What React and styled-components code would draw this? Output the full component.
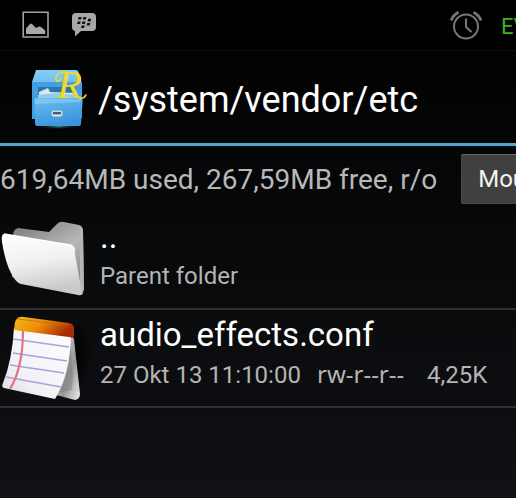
import React from "react";
import styled, { createGlobalStyle } from "styled-components";

const files = [
  { name: "..", details: "Parent folder", icon: FolderIcon },
  {
    name: "audio_effects.conf",
    details: "27 Okt 13 11:10:00",
    permissions: "rw-r--r--",
    size: "4,25K",
    icon: NoteIcon,
  },
];

function App() {
  return (
    <>
      <GlobalStyle />
      <Screen>
        <StatusBar>
          <StatusGroup>
            <PictureIcon />
            <MessengerIcon />
          </StatusGroup>
          <StatusGroup $end>
            <AlarmIcon />
            <Carrier>EV</Carrier>
          </StatusGroup>
        </StatusBar>

        <Header>
          <ExplorerIcon />
          <Title>/system/vendor/etc</Title>
        </Header>

        <Storage>
          <StorageText>619,64MB used, 267,59MB free, r/o</StorageText>
          <MountButton type="button">Mount R/W</MountButton>
        </Storage>

        <FileList>
          {files.map(({ name, details, permissions, size, icon: Icon }) => (
            <li key={name}>
              <FileButton type="button">
                <Icon />
                <FileText>
                  <FileName>{name}</FileName>
                  <FileDetails>
                    <span>{details}</span>
                    {permissions && <Permissions>{permissions}</Permissions>}
                    {size && <span>{size}</span>}
                  </FileDetails>
                </FileText>
              </FileButton>
            </li>
          ))}
        </FileList>
      </Screen>
    </>
  );
}

export default App;

// --------------- icons ------------------

function PictureIcon() {
  return (
    <svg width="28" height="28" viewBox="0 0 28 28" aria-hidden="true">
      <path d="M1.2 1.2H26V26H1.2Z" fill="none" stroke="#a2a2a2" strokeWidth="1.6" />
      <path
        d="M4 23V17.5L8.5 12.5L10 13L14 17L17 15.5L19 16L23.2 19.5V23Z"
        fill="#a8a8a8"
      />
    </svg>
  );
}

function MessengerIcon() {
  return (
    <svg width="26" height="28" viewBox="0 0 26 28" aria-hidden="true">
      <path
        d="M5 2H21Q25 2 25 6V16Q25 20 21 20H10L4 25.5V20Q1 19.5 1 16V6Q1 2 5 2Z"
        fill="#a8a8a8"
      />
      <g fill="#111">
        <path d="M7.5 6H10.6L10 8.6H7Z" />
        <path d="M12.3 6H15.4L14.8 8.6H11.8Z" />
        <path d="M6.6 10.4H9.7L9.1 13H6.1Z" />
        <path d="M11.4 10.4H14.5L13.9 13H10.9Z" />
        <path d="M17.1 7.8H20.2L19.6 10.4H16.6Z" />
        <path d="M16.2 12H19.3L18.7 14.6H15.7Z" />
        <path d="M10.6 14.4H13.7L13.1 17H10.1Z" />
      </g>
    </svg>
  );
}

function AlarmIcon() {
  return (
    <svg
      width="34"
      height="32"
      viewBox="0 0 34 32"
      fill="none"
      stroke="#777"
      strokeWidth="2"
      aria-hidden="true"
    >
      <circle cx="17" cy="17.5" r="12" />
      <path d="M17 9.5V18L22.5 23" />
      <path d="M2.2 11.5Q4 6 9.5 3.2M24.5 3.2Q30 6 32 11.5" strokeWidth="2.8" />
    </svg>
  );
}

function ExplorerIcon() {
  return (
    <svg width="60" height="68" viewBox="0 0 60 68" aria-hidden="true">
      <defs>
        <linearGradient id="cabinetTop" x1="0" y1="0" x2="0" y2="1">
          <stop offset="0" stopColor="#82cdf6" />
          <stop offset="1" stopColor="#3da0e8" />
        </linearGradient>
        <linearGradient id="cabinetFront" x1="0" y1="0" x2="0.4" y2="1">
          <stop offset="0" stopColor="#70bff0" />
          <stop offset="0.5" stopColor="#52aae8" />
          <stop offset="1" stopColor="#3b95dc" />
        </linearGradient>
        <radialGradient id="cabinetGlow">
          <stop offset="0" stopColor="#3b8594" />
          <stop offset="1" stopColor="#000" stopOpacity="0" />
        </radialGradient>
      </defs>
      <ellipse cx="30" cy="62.5" rx="22" ry="3" fill="url(#cabinetGlow)" />
      <path d="M8 6H48Q50 6 51 9L54 20V52Q54 55 50 55H4V18Z" fill="url(#cabinetTop)" />
      <path d="M4 18H54V54L52 55V35H6V55L4 54Z" fill="#449ee2" />
      <path d="M10 23H48V34H10Z" fill="#2c75a8" />
      <path d="M11 28L20 24L22 28L47 29V34H11Z" fill="#d6e8f2" />
      <path d="M10 31L29 29L48 31V35H10Z" fill="#91cbed" />
      <path
        d="M7 34H53Q55 34 54.6 37L53 60Q52.5 62 51 62H9Q7 62 7 59Z"
        fill="url(#cabinetFront)"
      />
      <path d="M7 35H53V38L7 40Z" fill="#91d3fa" opacity="0.55" />
      <rect x="23.5" y="46.5" width="11" height="6" rx="2" fill="#c8dce6" />
      <path d="M25 48H33V51H25Z" fill="#46606c" />
      <path d="M25 51H33" stroke="#fff" />
      <text
        x="29"
        y="34"
        fill="#f1da25"
        fontFamily="'Liberation Serif', serif"
        fontSize="41"
        fontStyle="italic"
      >
        R
      </text>
      <path
        d="M37 7.5Q27 9 28 16Q30 19 33 15M51 33.5Q55 36 58 31"
        fill="none"
        stroke="#f1da25"
        strokeWidth="1.5"
        strokeLinecap="round"
      />
    </svg>
  );
}

function FolderIcon() {
  return (
    <svg width="92" height="90" viewBox="0 0 92 90" aria-hidden="true">
      <defs>
        <linearGradient id="folderFront" x1="0" y1="0" x2="0.2" y2="1">
          <stop offset="0" stopColor="#fff" />
          <stop offset="0.5" stopColor="#f1f1f1" />
          <stop offset="1" stopColor="#c9c9c9" />
        </linearGradient>
        <linearGradient id="folderBack" x1="0" y1="0" x2="0.6" y2="1">
          <stop offset="0" stopColor="#777" />
          <stop offset="0.6" stopColor="#b8b8b8" />
          <stop offset="1" stopColor="#888" />
        </linearGradient>
      </defs>
      <path
        d="M13 21Q13 14 18 13L49 17L57 9Q60 6 64 7L79 10Q83 11 83 16L84 74L82 80L12 62Z"
        fill="url(#folderBack)"
      />
      <path d="M79 11Q83 12 83 17L84 74L82 80L80 70V20Z" fill="#b5b5b5" />
      <path
        d="M4 19L70 30Q74 31 74.5 36L82 78Q82 81 78 80L21 69Q17 68 14 63Q6 52 2 27Q1 19 4 19Z"
        fill="url(#folderFront)"
      />
      <path d="M4 19L70 30Q74 31 74.5 36" fill="none" stroke="#fff" strokeWidth="1.3" />
    </svg>
  );
}

function NoteIcon() {
  return (
    <svg width="92" height="90" viewBox="0 0 92 90" aria-hidden="true">
      <defs>
        <linearGradient id="noteBinding" x1="0" y1="0" x2="1" y2="0.4">
          <stop offset="0" stopColor="#f5bd16" />
          <stop offset="0.5" stopColor="#ed8d09" />
          <stop offset="1" stopColor="#a92b04" />
        </linearGradient>
        <linearGradient id="notePaper" x1="1" y1="0" x2="0" y2="1">
          <stop offset="0" stopColor="#fff" />
          <stop offset="0.7" stopColor="#f1f0f4" />
          <stop offset="1" stopColor="#d8d8dc" />
        </linearGradient>
        <linearGradient id="noteBack" x1="0" y1="0" x2="1" y2="1">
          <stop offset="0" stopColor="#ddd" />
          <stop offset="0.6" stopColor="#989898" />
          <stop offset="1" stopColor="#eee" />
        </linearGradient>
        <radialGradient id="noteShadow">
          <stop offset="0" stopColor="#000" />
          <stop offset="1" stopColor="#000" stopOpacity="0" />
        </radialGradient>
      </defs>
      <ellipse cx="76" cy="40" rx="16" ry="36" fill="url(#noteShadow)" />
      <path d="M71 20L74 26L80 81Q80 86 75 87L56 82Z" fill="url(#noteBack)" />
      <path d="M70 28L73 62L72 77L57 80Z" fill="#777" opacity="0.45" />
      <path d="M14 15L71 22Q70 62 55 86L4 75Q1 74 3 70Q12 48 14 15Z" fill="url(#notePaper)" />
      <path
        d="M13 26L69 34M13 40L67 48M10 52L64 60M6 64L61 74"
        fill="none"
        stroke="#aaa1dc"
        strokeWidth="1.4"
      />
      <path d="M23 17Q23 55 10 76" fill="none" stroke="#e57282" strokeWidth="2.2" />
      <path
        d="M15 9Q17 3 24 4L69 10Q74 11 74 15V23Q73 26 69 24L14 17Z"
        fill="url(#noteBinding)"
      />
      <path d="M17 6L69 12" stroke="#b86c13" strokeWidth="1.2" opacity="0.7" />
    </svg>
  );
}

// --------------- styles ------------------

const GlobalStyle = createGlobalStyle`
  * {
    box-sizing: border-box;
  }

  body {
    margin: 0;
    background-color: #0f1013;
    font-family: Roboto, "Liberation Sans", sans-serif;
    overflow-x: hidden;
  }
`;

const Screen = styled.main`
  min-height: 100vh;
  overflow: hidden;
  color: white;
  background: linear-gradient(#000, #08090b 50%, #101114);

  svg {
    flex-shrink: 0;
  }
`;

const StatusBar = styled.div`
  height: 51px;
  display: flex;
  justify-content: space-between;
  align-items: center;
  padding-left: 22px;
  background-color: black;
  border-bottom: 1px solid #101010;
`;

const StatusGroup = styled.div`
  display: flex;
  align-items: center;
  gap: ${({ $end }) => ($end ? "18px" : "21px")};
`;

const Carrier = styled.span`
  width: 15px;
  font-size: 22px;
  line-height: 28px;
  padding-top: 4px;
  white-space: nowrap;
  color: #3cb41c;
`;

const Header = styled.header`
  height: 95px;
  display: flex;
  align-items: center;
  gap: 10px;
  padding: 2px 0 0 28px;
  border-bottom: 3px solid #4fa8cf;
`;

const Title = styled.h1`
  margin: 0;
  padding-top: 4px;
  font-size: 36px;
  line-height: 44px;
  font-weight: 400;
  white-space: nowrap;
`;

const Storage = styled.div`
  height: 66px;
  display: flex;
  align-items: flex-start;
  gap: 24px;
  padding-top: 8px;
`;

const StorageText = styled.p`
  flex-shrink: 0;
  margin: 0;
  font-size: 28px;
  line-height: 52px;
  white-space: nowrap;
  color: #b8b8b8;
`;

const MountButton = styled.button`
  flex-shrink: 0;
  height: 50px;
  padding: 0 16px;
  font: inherit;
  font-size: 24px;
  white-space: nowrap;
  color: #f2f2f2;
  background-color: #404041;
  border: 1px solid #4a4a4a;
  border-top-color: #696969;
  border-radius: 2px;
`;

const FileList = styled.ul`
  list-style: none;
  padding: 0;
  margin: 0;
`;

const FileButton = styled.button`
  width: 100%;
  height: 98px;
  display: flex;
  align-items: center;
  gap: 8px;
  padding: 0;
  font: inherit;
  text-align: left;
  white-space: nowrap;
  color: inherit;
  background-color: transparent;
  border: none;
  border-bottom: 2px solid #303133;
`;

const FileText = styled.span`
  display: flex;
  flex-direction: column;
  padding-bottom: 10px;
`;

const FileName = styled.span`
  font-size: 33px;
  line-height: 42px;
`;

const FileDetails = styled.span`
  display: grid;
  grid-template-columns: 217px 110px auto;
  align-items: baseline;
  font-size: 24px;
  line-height: 36px;
  color: #b4b4b4;
`;

const Permissions = styled.span`
  font-family: "Noto Sans", Roboto, sans-serif;
`;
